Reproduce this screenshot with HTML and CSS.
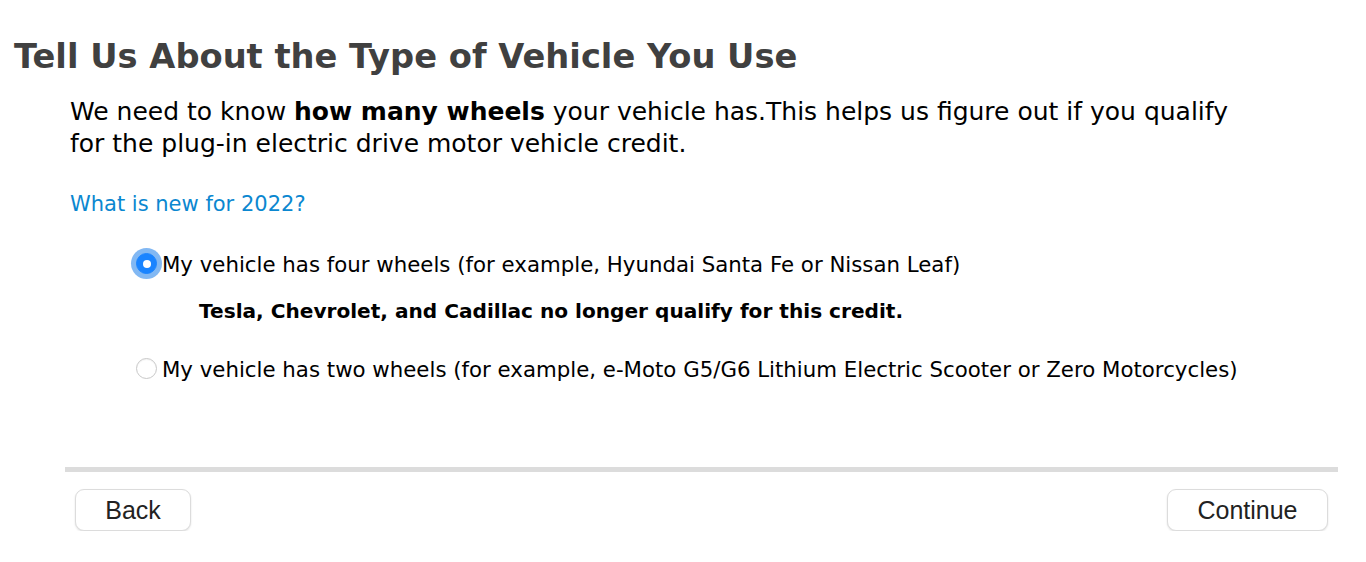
FILE: index.html
```html
<!DOCTYPE html>
<html lang="en">
<head>
<meta charset="utf-8">
<title>Vehicle type</title>
<link rel="stylesheet" href="styles.css">
</head>
<body>
<div class="page">
  <h1 class="title">Tell Us About the Type of Vehicle You Use</h1>
  <div class="content">
    <p class="intro">We need to know <b>how many wheels</b> your vehicle has.This helps us figure out if you qualify<br>for the plug-in electric drive motor vehicle credit.</p>
    <a class="link" href="#">What is new for 2022?</a>
    <div class="options">
      <label class="option">
        <span class="radio checked"><span class="dot"></span></span>
        <span class="opt-text">My vehicle has four wheels (for example, Hyundai Santa Fe or Nissan Leaf)</span>
      </label>
      <p class="note">Tesla, Chevrolet, and Cadillac no longer qualify for this credit.</p>
      <label class="option">
        <span class="radio"></span>
        <span class="opt-text">My vehicle has two wheels (for example, e-Moto G5/G6 Lithium Electric Scooter or Zero Motorcycles)</span>
      </label>
    </div>
    <div class="divider"></div>
    <div class="actions">
      <button class="btn btn-back">Back</button>
      <button class="btn btn-continue">Continue</button>
    </div>
  </div>
</div>
</body>
</html>
```

FILE: styles.css
```css
* { box-sizing: border-box; }
html, body { margin: 0; padding: 0; background: #fff; }
body { font-family: "DejaVu Sans", sans-serif; color: #000; }
.page { padding: 37px 28px 0 14px; }
.title {
  margin: 0;
  font-size: 33.7px;
  font-weight: bold;
  color: #404040;
  line-height: 40px;
}
.content { padding-left: 51px; }
.intro {
  margin: 19px 0 0 5px;
  font-size: 25px;
  line-height: 32px;
}
.intro b { font-weight: bold; }
.link {
  display: block;
  margin: 32px 0 0 5px;
  font-size: 21px;
  line-height: 24px;
  color: #0b87d0;
  text-decoration: none;
}
.options { margin-top: 34px; padding-left: 66px; }
.option { display: flex; align-items: center; font-size: 21.3px; line-height: 30px; }
.radio {
  width: 21px; height: 21px; border-radius: 50%;
  border: 1px solid #c8c8c8;
  background: #fff;
  display: flex; align-items: center; justify-content: center;
  margin: -3px 5px 0 5px;
  flex: none;
  box-shadow: inset 0 1px 1px rgba(0,0,0,0.05);
}
.radio.checked {
  background: #1a84ff;
  border-color: #1a84ff;
  box-shadow: 0 0 0 5px #82b8f3;
}
.dot { width: 8px; height: 8px; border-radius: 50%; background: #fff; }
.note {
  margin: 16px 0 29px 68px;
  font-size: 20.1px;
  font-weight: bold;
  line-height: 30px;
}
.divider { margin-top: 82px; height: 5px; background: #dcdcdc; }
.actions { display: flex; justify-content: space-between; padding: 17px 10px 0 10px; }
.btn {
  font-family: "Liberation Sans", sans-serif;
  font-size: 25px;
  color: #222;
  background: #fff;
  border: 1px solid #dcdcdc;
  border-radius: 9px;
  height: 42px;
  padding: 0;
  box-shadow: 0 1px 2px rgba(0,0,0,0.12);
}
.btn-back { width: 116px; }
.btn-continue { width: 161px; }
```
